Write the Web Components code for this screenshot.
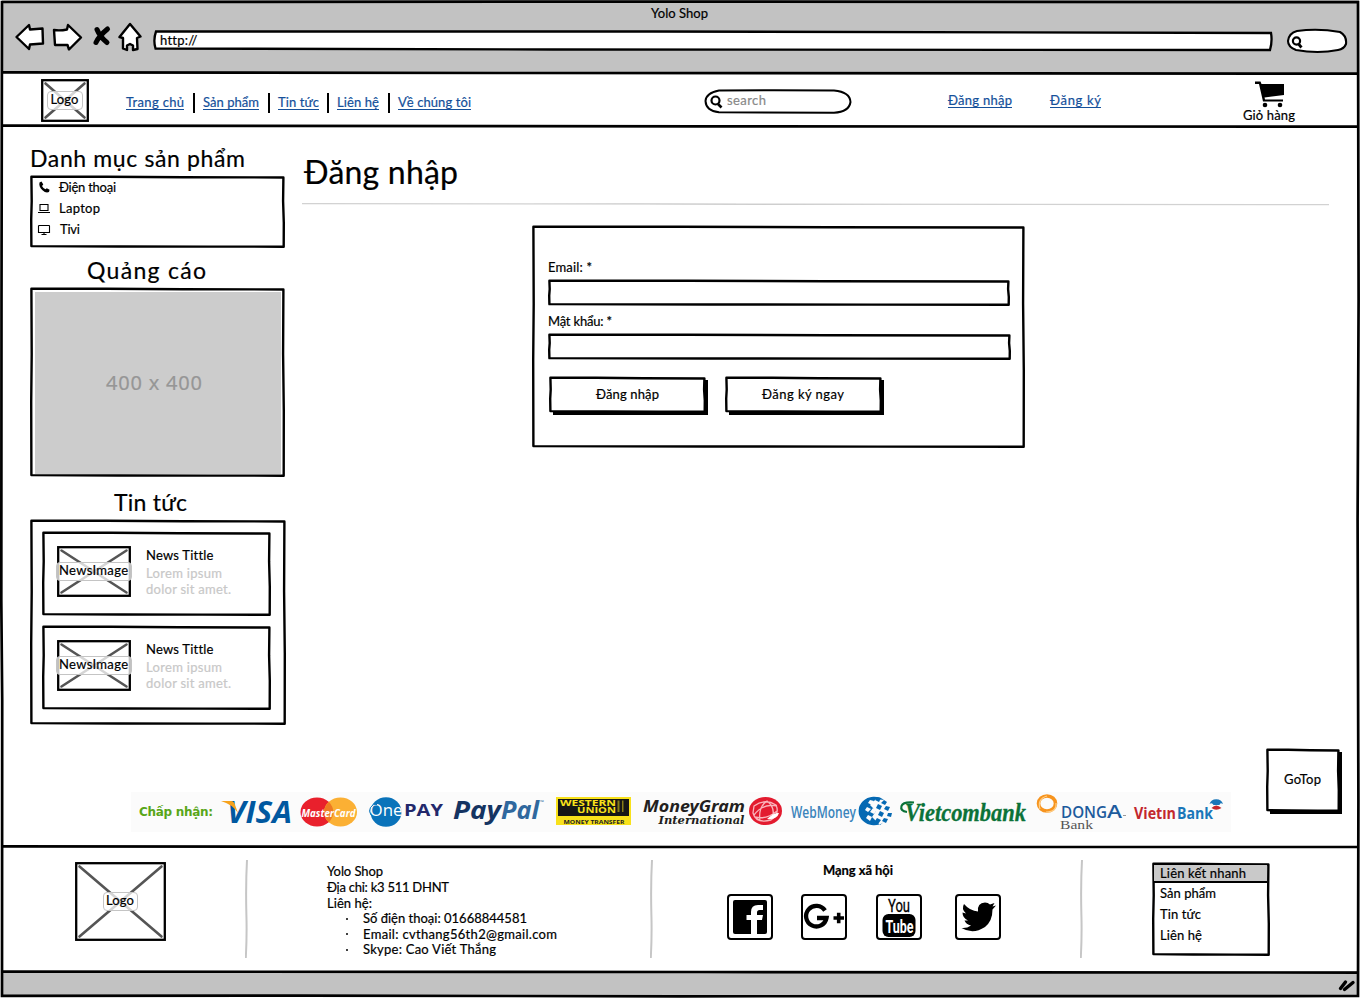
<!DOCTYPE html>
<html lang="vi">
<head>
<meta charset="utf-8">
<title>Yolo Shop</title>
<style>
html,body{margin:0;padding:0;background:#fff}
body{width:1360px;height:998px;overflow:hidden;font-family:Lato,"Liberation Serif",serif;color:#000}
</style>
</head>
<body>
<browser-window>
  <browser-bar slot="bar"></browser-bar>
  <shop-nav slot="nav"></shop-nav>
  <shop-sidebar slot="side"></shop-sidebar>
  <login-panel slot="content"></login-panel>
  <pay-strip slot="pay"></pay-strip>
  <shop-footer slot="footer"></shop-footer>
</browser-window>
<script>
const define = (name, html, after) => customElements.define(name, class extends HTMLElement {
  connectedCallback() {
    if (this.shadowRoot) return;
    this.attachShadow({mode: 'open'}).innerHTML = typeof html === 'function' ? html(this) : html;
    if (after) after(this);
  }
});
const num = (el, n, d) => el.hasAttribute(n) ? +el.getAttribute(n) : d;

/* A label: w = drawn width, s = font size, l = line height. Tracking is set so that the text fills w. */
define('sk-text', el => `<style>
:host{display:block;flex:none;width:${num(el,'w',50)}px;height:${num(el,'l',16)}px;white-space:pre;font-size:${num(el,'s',13)}px;line-height:${num(el,'l',16)}px;-webkit-text-stroke:.2px currentColor}
:host([link]){color:#15509a;border-bottom:1px solid #15509a}
:host([bold]){font-weight:700}
</style><span><slot></slot></span>`, el => {
  const s = el.shadowRoot.querySelector('span');
  const gap = (num(el,'w',50) - s.getBoundingClientRect().width) / Math.max(1, el.textContent.length - 1);
  s.style.letterSpacing = gap.toFixed(3) + 'px';
});

/* Hand-drawn rectangle with slotted content. */
define('sk-box', el => {
  const w = num(el,'w',100), h = num(el,'h',100), sh = el.hasAttribute('shadow') ? 2 : 0;
  const W = w - sh, H = h - sh;
  const line = `M1.4 .8L${W*.3} .7L${W*.6} 1.2L${W-1.6} 1.5L${W-1.9} ${H*.35}L${W-1.2} ${H*.65}L${W-1.3} ${H-1.3}L${W*.7} ${H-1.4}L${W*.35} ${H-1.5}L1.4 ${H-1.9}L1.2 ${H*.6}L1.7 ${H*.35}Z`;
  return `<style>
:host{display:block;position:relative;flex:none;box-sizing:border-box;width:${w}px;height:${h}px}
svg{position:absolute;left:0;top:0;z-index:0;overflow:visible}
div{position:relative;height:100%}
</style><svg width="${w}" height="${h}">${sh ? `<path d="M4 ${H-2}V${h}H${w}V3H${W-3}V${H-2}Z"/>` : ''}<path d="${line}" fill="#fff" stroke="#000" stroke-width="2.4" stroke-linejoin="round"/></svg><div><slot></slot></div>`;
});

/* Crossed image placeholder with a label plate in the middle. */
define('sk-image', el => {
  const w = num(el,'w',50), h = num(el,'h',50), pw = num(el,'pw',34), tw = num(el,'tw',28);
  return `<style>
:host{display:grid;flex:none;place-items:center;width:${w}px;height:${h}px}
svg,.p{grid-area:1/1}
svg{overflow:visible}
.p{position:relative;top:${num(el,'dy',0)}px;box-sizing:border-box;width:${pw}px;margin:0 -10px;height:19px;border:1px solid #c4c4c4;border-radius:4px;background:rgba(255,255,255,.75);display:grid;justify-content:center}
.p sk-text{margin:-1px 0 0 -1px}
</style><svg width="${w}" height="${h}"><rect x="1.2" y="1.2" width="${w-2.4}" height="${h-2.4}" fill="#fff" stroke="#000" stroke-width="2.3"/><path d="M4.5 4.5L${w-4.5} ${h-4.5}M${w-4.5} 4.5L4.5 ${h-4.5}" stroke="#555" stroke-width="2.6" stroke-linecap="round"/></svg><div class="p"><sk-text w="${tw}">${el.getAttribute('label')}</sk-text></div>`;
});

define('browser-window', `<style>
:host{display:grid;position:relative;width:1360px;height:998px;grid-template-rows:73px 53px 666px 55px 124px 27px;overflow:hidden}
.bar,.st{background:#c2c2c2;margin:0 1px 0 2px}
.main{display:grid;grid-template-columns:302px 1fr}
.st{display:flex;justify-content:flex-end;padding:7px 3px 0 0;height:17px}
.frame{position:absolute;left:0;top:0;pointer-events:none}
</style>
<div class="bar"><slot name="bar"></slot></div>
<div><slot name="nav"></slot></div>
<div class="main"><slot name="side"></slot><slot name="content"></slot></div>
<slot name="pay"></slot>
<slot name="footer"></slot>
<div class="st"><svg width="18" height="16" viewBox="0 0 18 16"><path d="M2.500 10.500L7.500 4M6.500 11.500L15 4.500" stroke="#000" stroke-width="3.4" stroke-linecap="round"/></svg></div>
<svg class="frame" width="1360" height="998" fill="none" stroke="#000" stroke-width="2.7">
<path d="M2 2L700 1.6L1358 2.2L1358.6 300L1357.6 520L1358.4 800L1358 996L680 996.3L300 995.6L2 995.8L2.2 700L1.3 600L1.5 300Z"/>
<path d="M2 72.4L500 73L1358 73.6"/><path d="M2 125.6L700 126.4L1358 126.6"/><path d="M2 846.4L700 847L1358 847"/><path d="M2 971.6L700 972L1358 972.6"/>
</svg>`);

define('browser-bar', `<style>
:host{display:block}
.t{display:flex;padding:5px 0 0 649px}
.r{display:flex;align-items:flex-start}
.url{display:grid;width:1120px;height:22px;margin:9px 0 0 11px}
.url>*{grid-area:1/1}
.url sk-text{margin:2px 0 0 7px}
</style>
<div class="t"><sk-text w="57">Yolo Shop</sk-text></div>
<div class="r">
<svg width="140" height="30" viewBox="2 22 140 30" style="margin-top:1px" fill="#fff" stroke="#000" stroke-width="2.4" stroke-linejoin="round">
<path d="M16.500 37L29 25L30 29.500L42.500 28.500L43 43.500L30 44.500L29 49Z"/>
<path d="M54 30Q60 31 67 29.500L68 25L81 37.500L69 49.500L67.500 45L55 45Z"/>
<path d="M97 29.500Q100 37 107 42.500M107.500 29Q99 36 96 42.500" fill="none" stroke-width="5" stroke-linecap="round"/>
<path d="M130 24L140.500 36.500L137 38L137.500 49L133 50V45.500L130 44L127 45.500V50L123 48.500V38L119.500 37Z"/>
</svg>
<div class="url"><svg width="1120" height="22"><path d="M3 1.500L500 1.500L1118 3Q1119.500 11 1117 20L400 19.500L2.500 18.500Q0 10 3 1.500Z" fill="#fff" stroke="#000" stroke-width="2.3"/></svg><sk-text w="37">http://</sk-text></div>
<svg width="62" height="26" viewBox="1286 28 62 26" style="margin:7px 0 0 13px"><path d="M1297 31Q1318 28 1340 32Q1347 36 1346 44Q1344 49 1338 50Q1318 54 1296 50Q1288 47 1288 41Q1289 33 1297 31Z" fill="#fff" stroke="#000" stroke-width="2.1"/><circle cx="1296.500" cy="41" r="3.600" fill="none" stroke="#000" stroke-width="2.200"/><path d="M1298.500 44L1301.500 47.500" stroke="#000" stroke-width="2.800"/></svg>
</div>`);

define('shop-nav', `<style>
:host{display:flex;height:53px;align-items:flex-start}
i{width:2px;height:20px;background:#000;margin:20px 8px 0 9px}
sk-text[link]{margin-top:21px;height:15px}
.s{display:grid;margin:16px 0 0 233px}
.s>*{grid-area:1/1}
.s sk-text{color:#888;margin:3px 0 0 23px}
.c{display:grid;justify-items:center;margin:8px 0 0 142px;width:52px}
.c sk-text{margin-top:-1px}
</style>
<sk-image w="48" h="43" pw="36" label="Logo" style="margin:6px 37px 0 41px"></sk-image>
<sk-text link w="58">Trang chủ</sk-text><i></i>
<sk-text link w="56">Sản phẩm</sk-text><i></i>
<sk-text link w="41">Tin tức</sk-text><i style="margin-left:8px"></i>
<sk-text link w="42">Liên hệ</sk-text><i></i>
<sk-text link w="73">Về chúng tôi</sk-text>
<div class="s"><svg width="148" height="25" fill="#fff" stroke="#000"><path d="M15 1.500L70 1.200L130 1.500Q146 3 146.500 13Q145 23 130 23.700L15 23.200Q2 22 1.500 12Q2 4 15 1.500Z" stroke-width="2"/><circle cx="11.500" cy="11.500" r="4" stroke-width="2.200"/><path d="M14 15L17.500 18.500" stroke-width="2.600"/></svg><sk-text w="39">search</sk-text></div>
<sk-text link w="64" style="margin:19px 38px 0 96px">Đăng nhập</sk-text>
<sk-text link w="51" style="margin-top:19px">Đăng ký</sk-text>
<div class="c"><svg width="30" height="27" viewBox="-1 0 30 27"><path d="M0 .5H5.500L6.500 3H29V14L9.500 16.500L10 18.500H28V20.500H8L4 3H0Z"/><circle cx="10" cy="24" r="2.300"/><circle cx="25" cy="24" r="2.300"/></svg><sk-text w="52">Giỏ hàng</sk-text></div>`);

define('news-card', `<style>
:host{display:block}
.r{display:flex;padding:14px 0 0 15px;gap:15px}
.d{color:#c8c8c8}
.x{padding-top:1px}
.x .d:nth-child(2){margin-top:2px}
</style><sk-box w="229" h="84"><div class="r"><sk-image w="74" h="51" pw="76" tw="69" dy="0" label="NewsImage"></sk-image>
<div class="x"><sk-text w="67">News Tittle</sk-text><sk-text class="d" w="76">Lorem ipsum</sk-text><sk-text class="d" w="85">dolor sit amet.</sk-text></div></div></sk-box>`);

define('shop-sidebar', `<style>
:host{display:flex;flex-direction:column;padding:18px 0 0 30px}
.m{display:grid;row-gap:5px;padding:3px 0 0 7px}
.m div{display:flex;height:16px;align-items:center;gap:8px}
.m svg{flex:none}
.ad{display:grid;place-items:center;margin-left:5px;position:relative;top:4px;width:246px;height:182px;background:#ccc;color:#969696;font-family:"Noto Sans",sans-serif}
.ad sk-text{margin-left:-8px}
.n{display:grid;row-gap:10px;padding:12px 0 0 12px}
</style>
<sk-text w="215" s="23" l="28">Danh mục sản phẩm</sk-text>
<sk-box w="255" h="72" style="margin-top:4px"><div class="m">
<div><svg width="14" height="14" viewBox="0 0 14 14"><path d="M2.500 2.500L4.500 1.500L6.300 4.500L5 6Q6.200 8.400 8.500 9.300L9.800 8.200L12.600 9.800L12 12Q9 13.500 5.500 10.300Q1.500 6.500 2.500 2.500Z"/></svg><sk-text w="57">Điện thoại</sk-text></div>
<div><svg width="14" height="14" fill="none" stroke="#000"><path d="M3 3.500H11V9.500H3ZM1 11.500H13" stroke-width="1.100"/></svg><sk-text w="41">Laptop</sk-text></div>
<div><svg width="14" height="14" fill="none" stroke="#000"><path d="M2 3.500H12Q12.500 3.500 12.500 4V10.500H1.500V4ZM4.500 12.500H9.500M7 10.500V12.500" stroke-width="1.100"/></svg><sk-text w="20" style="margin-left:1px">Tivi</sk-text></div>
</div></sk-box>
<sk-text w="119" s="23" l="28" style="margin:8px 0 4px 57px">Quảng cáo</sk-text>
<sk-box w="255" h="189"><div class="ad"><sk-text w="96" s="20" l="26">400 x 400</sk-text></div></sk-box>
<sk-text w="73" s="23" l="28" style="margin:11px 0 4px 84px">Tin tức</sk-text>
<sk-box w="256" h="205"><div class="n"><news-card></news-card><news-card></news-card></div></sk-box>`);

define('login-panel', `<style>
:host{display:block;width:1056px}
h1{margin:28px 0 13px 2px;font-weight:400}
.hr{display:block}
.f{padding:33px 0 0 16px}
.b{display:flex;gap:17px;margin:17px 0 0 1px}
.c{display:flex;padding:9px 0 0 47px}
.go{display:flex;justify-content:flex-end;margin:301px 16px 0 0}
.g{padding:22px 0 0 18px}
</style>
<h1><sk-text w="154" s="32" l="36">Đăng nhập</sk-text></h1>
<svg class="hr" width="1028" height="3"><path d="M0 .6L500 1.200L1027 1.600" stroke="#d2d2d2" stroke-width="1.200"/></svg>
<sk-box w="493" h="222" style="margin:20px 0 0 230px"><div class="f">
<sk-text w="44">Email: *</sk-text><sk-box w="462" h="26" style="margin:5px 0 7px"></sk-box>
<sk-text w="64">Mật khẩu: *</sk-text><sk-box w="463" h="26" style="margin-top:5px"></sk-box>
<div class="b"><sk-box shadow w="159" h="38"><div class="c"><sk-text w="63">Đăng nhập</sk-text></div></sk-box><sk-box shadow w="159" h="38"><div class="c" style="padding-left:37px"><sk-text w="82">Đăng ký ngay</sk-text></div></sk-box></div>
</div></sk-box>
<div class="go"><sk-box shadow w="76" h="65"><div class="g"><sk-text w="37">GoTop</sk-text></div></sk-box></div>`, el => {
  el.shadowRoot.querySelectorAll('.c').forEach(c => c.style.display = 'flex');
});

define('pay-strip', `<style>
:host{display:flex;align-items:flex-start;width:1092px;height:40px;margin-left:131px;padding-left:8px;background:#fbfbfb}
svg{flex:none;overflow:visible}
.l{color:#58a618;font-family:"DejaVu Sans",sans-serif;margin:12px 8px 0 0;-webkit-text-stroke:0}
text{font-family:"Open Sans",sans-serif;font-weight:700}
</style>
<sk-text class="l" bold w="74" s="12">Chấp nhận:</sk-text>
<svg width="70" height="40" viewBox="221 792 70 40"><text x="227" y="823" font-size="30.500" font-style="italic" font-weight="800" fill="#0058a0" textLength="65" lengthAdjust="spacingAndGlyphs">VISA</text><path d="M221 801H231Q234 801 235 805L238 813Q232 804 221 801Z" fill="#f7a21b"/></svg>
<svg width="58" height="40" viewBox="300 792 58 40" style="margin-left:9px"><ellipse cx="317" cy="812" rx="16.500" ry="14.500" fill="#e9202c"/><ellipse cx="340.500" cy="812" rx="16.500" ry="14.500" fill="#fbb034"/><path d="M328.800 801.700Q338 812 328.800 822.300Q319.500 812 328.800 801.700Z" fill="#ee7a22"/><text x="301.500" y="816.500" font-size="11" font-style="italic" fill="#fff" textLength="54" lengthAdjust="spacingAndGlyphs">MasterCard</text></svg>
<svg width="74" height="40" viewBox="369 792 74 40" style="margin-left:11px"><ellipse cx="386" cy="812" rx="15.500" ry="14.800" fill="#0a73ba"/><text x="369.500" y="816" font-size="17" fill="#fff" style="font-weight:400" textLength="33" lengthAdjust="spacingAndGlyphs">One</text><path d="M377 804.500A6 6.500 0 0 0 371 815" fill="none" stroke="#0a73ba"/><text x="404" y="816" font-size="15.500" fill="#23286b" textLength="39" lengthAdjust="spacingAndGlyphs">PAY</text></svg>
<svg width="92" height="40" viewBox="453 792 92 40" style="margin-left:10px"><text x="453" y="819" font-size="25" font-style="italic" font-weight="800" fill="#153462" textLength="48" lengthAdjust="spacingAndGlyphs">Pay</text><text x="501" y="819" font-size="25" font-style="italic" font-weight="800" fill="#30689e" textLength="38" lengthAdjust="spacingAndGlyphs">Pal</text><text x="540" y="804" font-size="5" fill="#30689e">™</text></svg>
<svg width="75" height="40" viewBox="556 792 75 40" style="margin-left:11px"><rect x="556" y="797" width="75" height="28" fill="#f8e11a"/><rect x="558" y="799" width="71" height="17" fill="#161616"/><g fill="#f8e11a"><text x="560" y="805.500" font-size="8" font-weight="800" textLength="56" lengthAdjust="spacingAndGlyphs">WESTERN</text><text x="577" y="812.500" font-size="8" textLength="39" lengthAdjust="spacingAndGlyphs">UNION</text><path d="M617.500 800.500h2v11.500h-2zM622 800.500h1.500v11.500h-1.500z" opacity=".5"/></g><text x="563.500" y="823.500" font-size="6" fill="#222" textLength="61" lengthAdjust="spacingAndGlyphs">MONEY TRANSFER</text></svg>
<svg width="140" height="40" viewBox="642 792 140 40" style="margin-left:11px"><g fill="#231f20" font-style="italic"><text x="643" y="811.500" font-size="15.500" style="font-family:'Noto Sans','Open Sans',sans-serif" textLength="102" lengthAdjust="spacingAndGlyphs">MoneyGram</text><text x="658.500" y="823.500" font-size="11.500" style="font-family:'DejaVu Serif',serif" textLength="86" lengthAdjust="spacingAndGlyphs">International</text></g><ellipse cx="765.500" cy="811" rx="16.500" ry="14" fill="#e31b2f"/><path d="M754 806Q765 798 776 805Q780 814 771 820Q756 824 753 813ZM754 815Q763 803 777 806M760 821Q758 807 767 801Q776 808 772 818M755 817Q767 820 777 811" fill="none" stroke="#f9b5bb" stroke-width="1.300"/><path d="M767 819Q774 812 779 813Q777 820 767 819Z" fill="#fff"/></svg>
<svg width="103" height="40" viewBox="790 792 103 40" style="margin-left:8px"><text x="791" y="818" font-size="15.500" style="font-weight:600" fill="#3a84bb" textLength="65" lengthAdjust="spacingAndGlyphs">WebMoney</text><path d="M884 800A15.500 14.300 0 1 0 884 822L880 825L872 817L876 811L870 805L876 799Z" fill="#0569b3"/><g fill="#0569b3"><path d="M877 797l4 1-2 4-4-2zM884 800l3 2-2 3-4-2zM878 804l4 2-2 4-4-2zM886 806l4 1-2 4-4-2zM880 811l4 2-2 4-4-2zM888 813l4 0-1 4-4-1zM877 818l4 2-3 4-3-3zM884 818l4 1-2 4-4-2z"/></g><g fill="#fbfbfb"><path d="M870 800l4 1-2 4-4-2zM867 807l4 2-3 3-3-2zM873 808l4 2-3 4-4-2zM868 815l4 2-2 4-4-3z"/></g></svg>
<svg width="126" height="40" viewBox="900 792 126 40" style="margin-left:7px"><text x="905" y="821" font-size="25" font-style="italic" style="font-family:'Liberation Serif',serif" fill="#0b7238" stroke="#0b7238" stroke-width=".3" textLength="121" lengthAdjust="spacingAndGlyphs">Vietcombank</text><path d="M907 812Q900 811 901.500 806Q903 801.500 914 802.500" fill="none" stroke="#0b7238" stroke-width="2.200"/></svg>
<svg width="90" height="40" viewBox="1036 792 90 40" style="margin-left:10px"><ellipse cx="1047" cy="803.500" rx="8.500" ry="7.500" fill="none" stroke="#f7941e" stroke-width="3.600"/><path d="M1040 809Q1037 799 1047 796M1046 812Q1057 812 1056 803" fill="none" stroke="#ffd08a" stroke-width="1.200"/><text x="1061" y="817.500" font-size="15.500" style="font-weight:600" fill="#1d5b9d" textLength="46" lengthAdjust="spacingAndGlyphs">DONG</text><text x="1107" y="817.500" font-size="18" style="font-weight:600" fill="#1d5b9d" textLength="15" lengthAdjust="spacingAndGlyphs">A</text><path d="M1123 815.500h3" stroke="#999"/><text x="1060" y="829" font-size="12.500" style="font-family:'Liberation Serif',serif;font-weight:400" fill="#555" textLength="33" lengthAdjust="spacingAndGlyphs">Bank</text></svg>
<svg width="90" height="40" viewBox="1134 792 90 40" style="margin-left:8px"><g font-size="15.500"><text x="1134" y="819" fill="#c3272d" textLength="42" lengthAdjust="spacingAndGlyphs">Vietın</text><text x="1177" y="819" fill="#1976b9" textLength="36" lengthAdjust="spacingAndGlyphs">Bank</text></g><path d="M1209.500 804A7 6.500 0 0 1 1223 804Q1220 802 1219.500 805H1213.500Q1212 802 1209.500 804Z" fill="#1976b9"/><path d="M1211.500 808Q1216 803 1221.500 808Q1216 811.500 1211.500 808Z" fill="#c3272d"/></svg>`);

define('social-icon', el => `<style>
:host{display:block;flex:none;box-sizing:border-box;width:46px;height:46px;border:2px solid #000;border-radius:4px;background:#fff}
svg{display:block;overflow:visible}
</style><svg width="42" height="42" viewBox="2 2 42 42">${{
  fb: '<rect x="6" y="6" width="34" height="34" rx="2"/><path d="M24 40V26H19.500V21H24V18Q24 11 31 11H36V16H32.500Q30 16 30 18.500V21H36L35 26H30V40Z" fill="#fff"/>',
  gp: '<path d="M24 16.500A10.300 10.300 0 1 0 25.500 24H16" fill="none" stroke="#000" stroke-width="4.300"/><path d="M32.500 24H43M37.700 18.800V29.200" stroke="#000" stroke-width="3.600"/>',
  yt: '<g font-family="Roboto,sans-serif"><text x="12" y="17.500" font-size="18" textLength="22" lengthAdjust="spacingAndGlyphs" stroke="#000" stroke-width=".3">You</text><rect x="6.500" y="20" width="33" height="23" rx="6"/><text x="9.500" y="38.500" font-size="19" font-weight="700" fill="#fff" textLength="28" lengthAdjust="spacingAndGlyphs">Tube</text></g>',
  tw: '<path d="M6.500 34Q12 34.500 16 31.500Q11 30.500 9.500 26.500H13Q7.500 24 7.500 18.500L11 19.500Q6 15 9 10Q15 17 23 17.500Q22 9 30 8.500Q33 8.500 35 10.500L39.500 9L37.500 12.500L41 11.500L37.500 15.500Q37.500 27 30 33Q18 41 6.500 34Z"/>'
}[el.getAttribute('kind')]}</svg>`);

define('shop-footer', `<style>
:host{display:flex;height:124px;align-items:flex-start}
.v{flex:none;margin-top:13px}
.a{width:323px;margin-left:79px}
.a div{display:flex;align-items:center;gap:15px;padding-left:19px}
.a b{width:2px;height:2px;background:#000;border-radius:1px}
.s{width:427px}
.s nav{display:flex;padding:16px 0 0 74px}
.q{display:grid}
.q .h{margin:2px 3px 0 2px;height:16px;background:#c9c9c9;border-bottom:2.4px solid #000;padding-left:6px}
.q .i{display:grid;row-gap:5px;padding:2px 0 0 8px}
</style>
<sk-image w="91" h="79" pw="35" label="Logo" style="margin:15px 79px 0 75px"></sk-image>
<svg class="v" width="3" height="99"><path d="M2 0Q.6 25 1.400 55Q2 75 .8 98" fill="none" stroke="#c6c6c6" stroke-width="2"/></svg>
<div class="a" style="padding-top:16px">
<sk-text w="56">Yolo Shop</sk-text><sk-text w="122">Địa chỉ: k3 511 DHNT</sk-text><sk-text w="45" l="16">Liên hệ:</sk-text>
<div><b></b><sk-text w="164" l="15">Số điện thoại: 01668844581</sk-text></div><div><b></b><sk-text w="194">Email: cvthang56th2@gmail.com</sk-text></div><div><b></b><sk-text w="133" l="15">Skype: Cao Viết Thắng</sk-text></div>
</div>
<svg class="v" width="3" height="99"><path d="M2 0Q.6 25 1.400 55Q2 75 .8 98" fill="none" stroke="#c6c6c6" stroke-width="2"/></svg>
<div class="s" style="padding-top:15px"><sk-text bold w="70" style="margin-left:170px">Mạng xã hội</sk-text>
<nav><social-icon kind="fb"></social-icon><social-icon kind="gp" style="margin-left:28px"></social-icon><social-icon kind="yt" style="margin-left:29px"></social-icon><social-icon kind="tw" style="margin-left:33px"></social-icon></nav></div>
<svg class="v" width="3" height="99"><path d="M2 0Q.6 25 1.400 55Q2 75 .8 98" fill="none" stroke="#c6c6c6" stroke-width="2"/></svg>
<sk-box w="118" h="93" style="margin:16px 0 0 69px"><div class="q"><div class="h"><sk-text w="86">Liên kết nhanh</sk-text></div>
<div class="i"><sk-text w="56">Sản phẩm</sk-text><sk-text w="41">Tin tức</sk-text><sk-text w="42">Liên hệ</sk-text></div></div></sk-box>`);
</script>
</body>
</html>
